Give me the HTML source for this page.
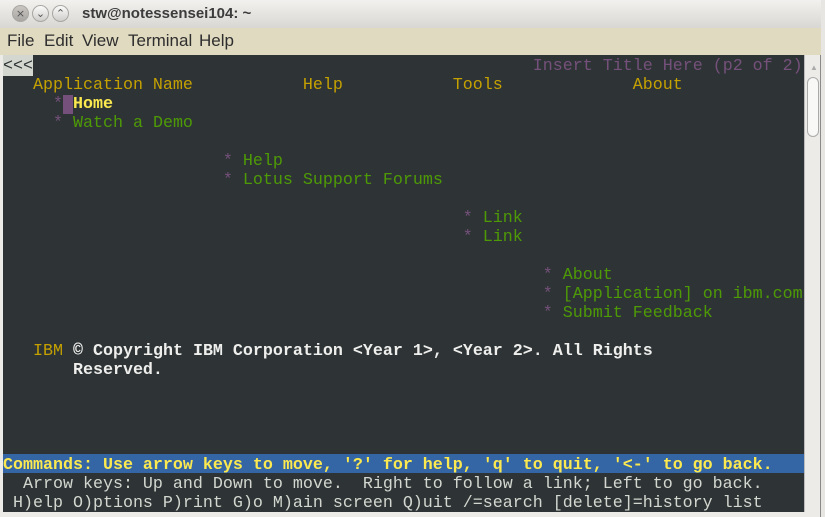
<!DOCTYPE html>
<html><head><meta charset="utf-8"><style>
*{margin:0;padding:0;box-sizing:border-box}
html,body{width:825px;height:517px;overflow:hidden;background:#e8e6e2}
.win{position:absolute;left:0;top:0;width:821px;height:517px;background:#edebe8;border-right:1px solid #8a8a8a}
.title{position:absolute;left:0;top:0;width:821px;height:28px;background:linear-gradient(#f2f1ef,#d9d7d3);font:bold 15px "Liberation Sans",sans-serif;color:#3c3c3c}
.title span.t{position:absolute;left:82px;top:5px}
.btn{position:absolute;top:5px;width:17px;height:17px;border-radius:50%;background:linear-gradient(#fafafa,#d0cecb);border:1px solid #a9a7a3;font:11px "DejaVu Sans",sans-serif;color:#555;text-align:center;line-height:15px}
.menu{position:absolute;left:0;top:28px;width:821px;height:27px;background:#e0dac0;font:17px "Liberation Sans",sans-serif;color:#2e2e2e}
.menu span{position:absolute;top:3px}
.term{position:absolute;left:3px;top:55px;width:801px;height:457px;background:#2e3436;font:16.67px "Liberation Mono",monospace;line-height:19px;white-space:pre;color:#d3d7cf}
.sb{position:absolute;left:804px;top:55px;width:16px;height:457px;background:#ecebe8;border-left:1px solid #bbb}
.row{position:absolute;left:0;height:19px;line-height:19px;padding-top:2px}
.y{color:#c4a000}.g{color:#4e9a06}.p{color:#75507b}.w{color:#eeeeec;font-weight:bold}.by{color:#fce94f;font-weight:bold}
</style></head><body>
<div class="win">
<div class="title">
<div class="btn" style="left:12px;background:linear-gradient(#c9c6c2,#a9a6a2)">×</div>
<div class="btn" style="left:32px">⌄</div>
<div class="btn" style="left:52px">⌃</div>
<span class="t">stw@notessensei104: ~</span></div>
<div class="menu"><span style="left:7px">File</span><span style="left:44px">Edit</span><span style="left:82px">View</span><span style="left:128px">Terminal</span><span style="left:199px">Help</span></div>
<div class="term">
<div class="row" style="top:0;padding-top:0;height:21px"><span style="background:#d3d7cf;color:#2e3436;display:inline-block;height:21px;line-height:23px">&lt;&lt;&lt;</span><span style="line-height:23px">                                                  <span class="p">Insert Title Here (p2 of 2)</span></span></div>
<div class="row" style="top:19px"><span class="y">   Application Name           Help           Tools             About</span></div>
<div class="row" style="top:38px">     <span class="p">*</span><span style="background:#75507b"> </span><span class="by">Home</span></div>
<div class="row" style="top:57px">     <span class="p">*</span> <span class="g">Watch a Demo</span></div>
<div class="row" style="top:95px">                      <span class="p">*</span> <span class="g">Help</span></div>
<div class="row" style="top:114px">                      <span class="p">*</span> <span class="g">Lotus Support Forums</span></div>
<div class="row" style="top:152px">                                              <span class="p">*</span> <span class="g">Link</span></div>
<div class="row" style="top:171px">                                              <span class="p">*</span> <span class="g">Link</span></div>
<div class="row" style="top:209px">                                                      <span class="p">*</span> <span class="g">About</span></div>
<div class="row" style="top:228px">                                                      <span class="p">*</span> <span class="g">[Application] on ibm.com</span></div>
<div class="row" style="top:247px">                                                      <span class="p">*</span> <span class="g">Submit Feedback</span></div>
<div class="row" style="top:285px">   <span class="y">IBM</span> <span class="w">© Copyright IBM Corporation &lt;Year 1&gt;, &lt;Year 2&gt;. All Rights</span></div>
<div class="row" style="top:304px">       <span class="w">Reserved.</span></div>
<div class="row" style="top:399px;width:801px;background:#3465a4"><span class="by">Commands: Use arrow keys to move, '?' for help, 'q' to quit, '&lt;-' to go back.</span></div>
<div class="row" style="top:418px">  Arrow keys: Up and Down to move.  Right to follow a link; Left to go back.</div>
<div class="row" style="top:437px"> H)elp O)ptions P)rint G)o M)ain screen Q)uit /=search [delete]=history list</div>
</div>
<div class="sb"><div style="position:absolute;left:5px;top:8px;font:8px sans-serif;color:#aaa">▲</div><div style="position:absolute;left:2px;top:22px;width:12px;height:60px;border:1px solid #aaa;border-radius:6px;background:#f8f8f6"></div></div>
</div>
</body></html>
